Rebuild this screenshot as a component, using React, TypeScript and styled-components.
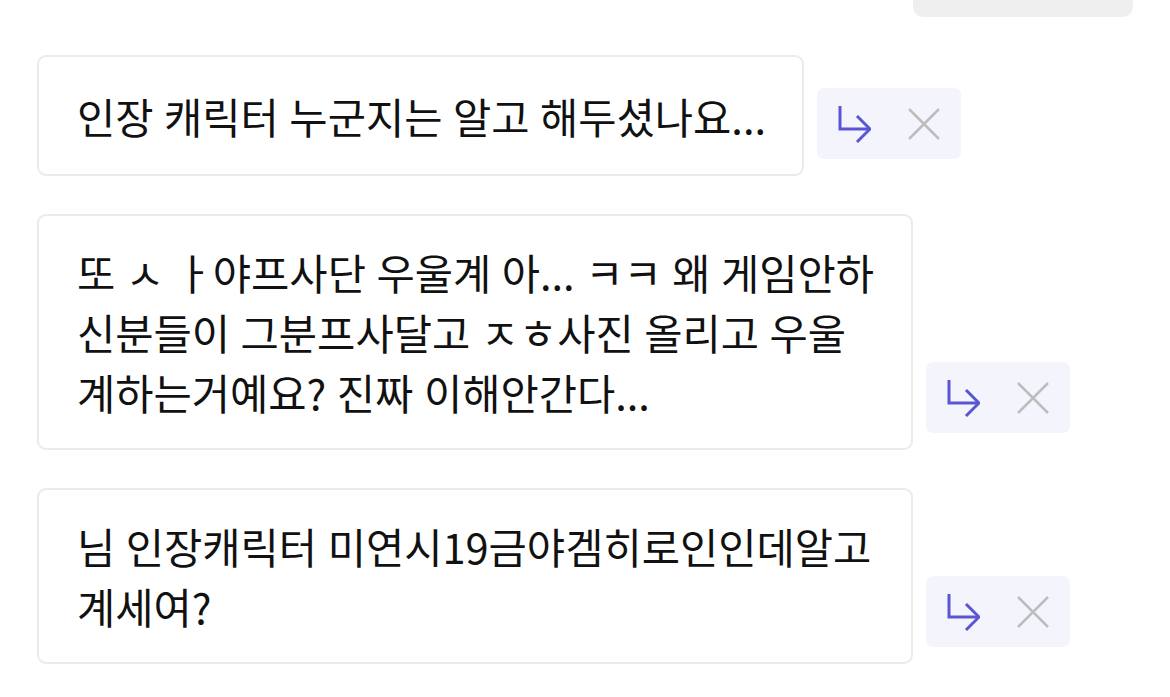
import React from "react";
import styled, { createGlobalStyle } from "styled-components";

const Global = createGlobalStyle`
  html, body { margin: 0; padding: 0; background: #ffffff; }
  body { font-family: "Noto Sans CJK KR", "Noto Sans", sans-serif; }
`;

const Page = styled.div`
  width: 1170px;
  height: 697px;
  overflow: hidden;
  box-sizing: border-box;
  padding: 0 37px;
  display: flex;
  flex-direction: column;
`;

const TopBar = styled.div`
  align-self: flex-end;
  width: 220px;
  height: 17px;
  background: #efefef;
  border-radius: 0 0 10px 10px;
`;

const List = styled.div`
  display: flex;
  flex-direction: column;
  gap: 38px;
  margin-top: 38px;
`;

const Row = styled.div`
  display: flex;
  align-items: flex-end;
  gap: 13px;
`;

const Bubble = styled.div`
  max-width: 876px;
  min-height: 121px;
  box-sizing: border-box;
  display: flex;
  align-items: center;
  border: 2px solid #ebebeb;
  border-radius: 9px;
  padding: 26px 36px 26px 38px;
  font-size: 41.6px;
  line-height: 60px;
  word-spacing: 1.2px;
  color: #111111;
  word-break: break-all;
`;

const Actions = styled.div`
  flex: none;
  display: flex;
  align-items: center;
  gap: 36px;
  width: 144px;
  height: 71px;
  box-sizing: border-box;
  padding: 0 20px;
  margin-bottom: 17px;
  background: #f4f4fd;
  border-radius: 7px;
`;

const IconButton = styled.button`
  border: none;
  background: none;
  padding: 0;
  display: flex;
  cursor: pointer;
`;

const ReplyIcon = () => (
  <svg width="34" height="40" viewBox="0 0 34 40" fill="none">
    <path d="M3 2V25H33" stroke="#5a55d2" strokeWidth="3" />
    <path d="M20 12L33 25L20 38" stroke="#5a55d2" strokeWidth="3" />
  </svg>
);

const CloseIcon = () => (
  <svg width="34" height="34" viewBox="0 0 34 34" fill="none">
    <path d="M2 2L32 32M32 2L2 32" stroke="#bdbdbd" strokeWidth="2.5" />
  </svg>
);

const messages = [
  "인장 캐릭터 누군지는 알고 해두셨나요...",
  "또 ㅅ ㅏ야프사단 우울계 아... ㅋㅋ 왜 게임안하신분들이 그분프사달고 ㅈㅎ사진 올리고 우울계하는거예요? 진짜 이해안간다...",
  "님 인장캐릭터 미연시19금야겜히로인인데알고계세여?",
];

export default function App() {
  return (
    <Page>
      <Global />
      <TopBar />
      <List>
        {messages.map((m, i) => (
          <Row key={i}>
            <Bubble>{m}</Bubble>
            <Actions>
              <IconButton aria-label="reply">
                <ReplyIcon />
              </IconButton>
              <IconButton aria-label="close">
                <CloseIcon />
              </IconButton>
            </Actions>
          </Row>
        ))}
      </List>
    </Page>
  );
}
